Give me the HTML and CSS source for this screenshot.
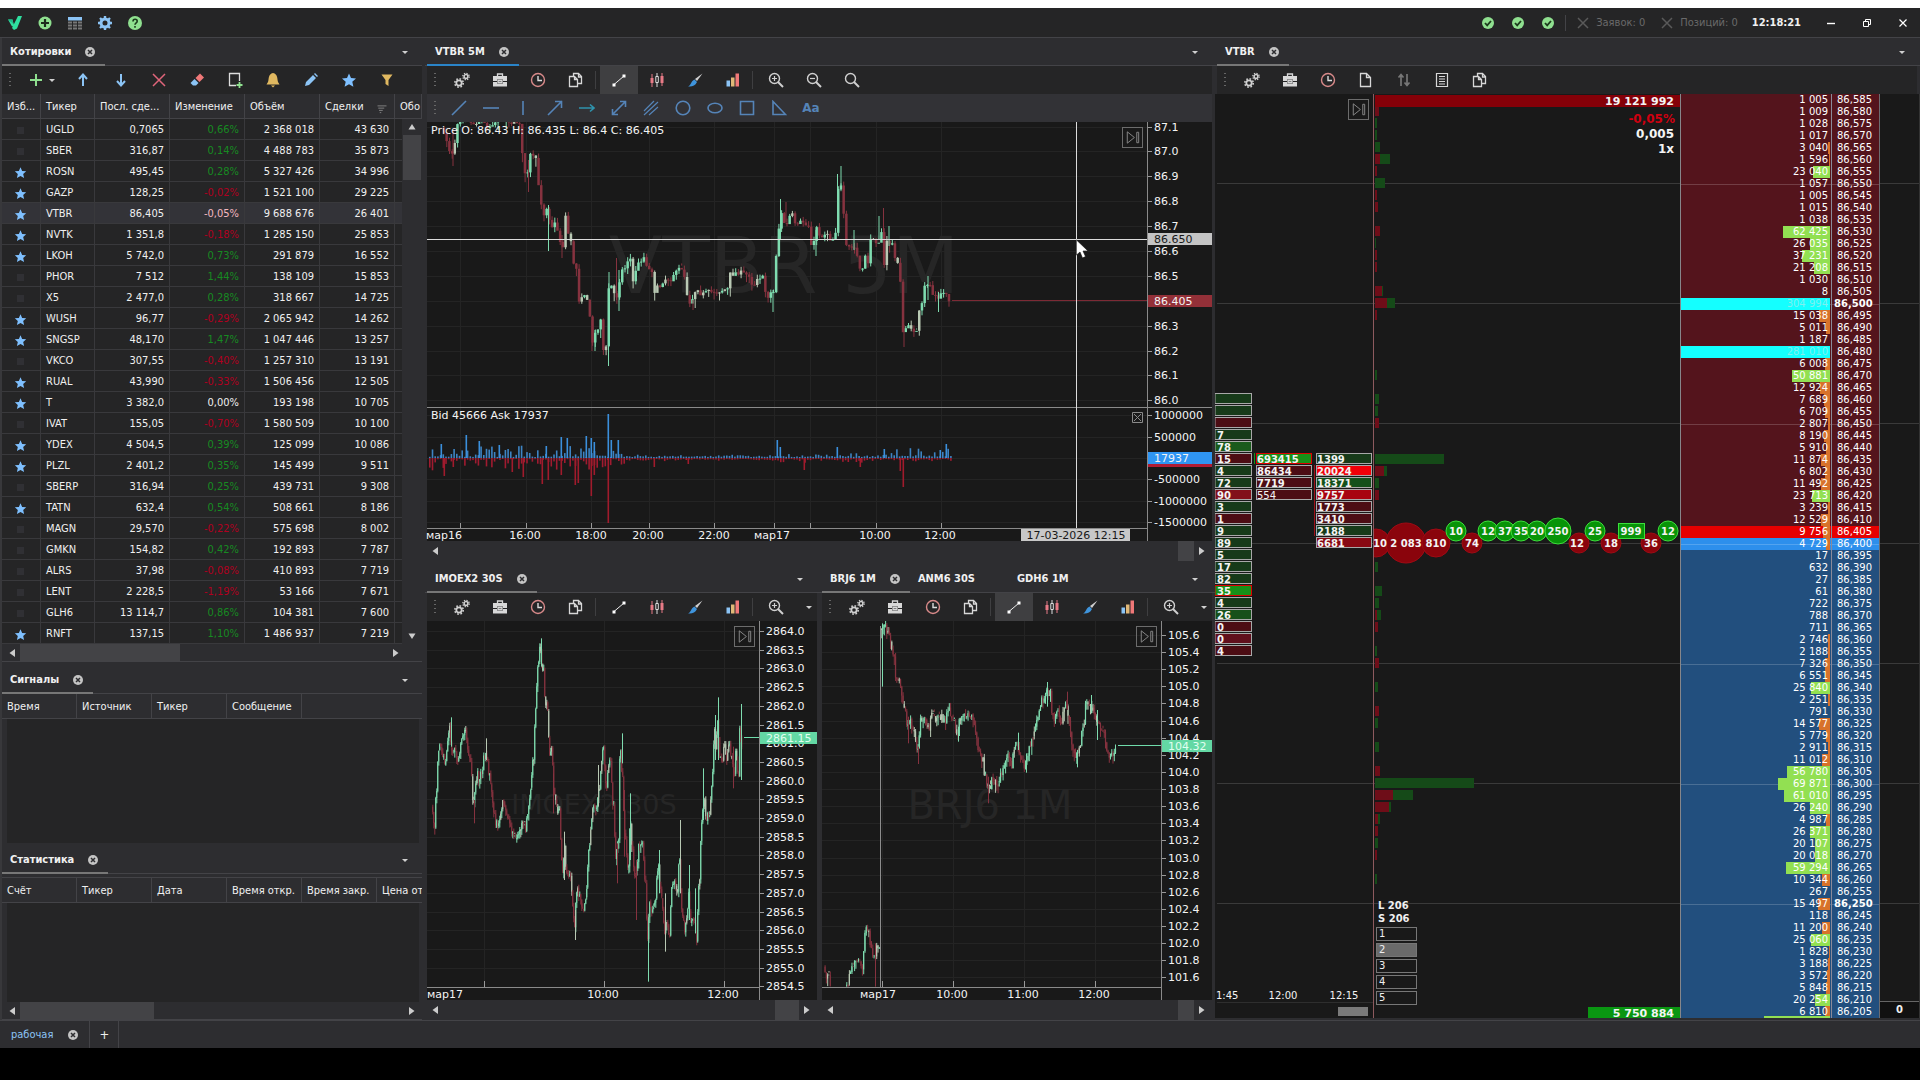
FILE: index.html
```html
<!DOCTYPE html>
<html lang="ru">
<head>
<meta charset="utf-8">
<title>Торговый терминал</title>
<link rel="stylesheet" href="styles.css">
</head>
<body>
<svg class="defs" aria-hidden="true">
  <symbol id="i-logo" viewBox="0 0 16 16"><path d="M1 4.500h4.500l1.500 6-2 1zM11 1h4l-5 12.500-3 1.500-2-2z" fill="#2fe0a0"/><path d="M1 4.500h4.500l1 4.500z" fill="#1fb98a"/></symbol>
  <symbol id="i-addc" viewBox="0 0 16 16"><circle cx="8" cy="8" r="6.500" fill="#8fe08f"/><path d="M8 4v8M4 8h8" stroke="#1c2b1c" stroke-width="2.200"/></symbol>
  <symbol id="i-grid" viewBox="0 0 16 16"><path d="M1 2h14v3.500H1z" fill="#8cc4f5"/><path d="M1 6.500h4v2H1zM6 6.500h4v2H6zM11 6.500h4v2h-4zM1 9.500h4v2H1zM6 9.500h4v2H6zM11 9.500h4v2h-4zM1 12.500h4v2H1zM6 12.500h4v2H6zM11 12.500h4v2h-4z" fill="#777"/></symbol>
  <symbol id="i-cog" viewBox="0 0 16 16"><circle cx="8" cy="8" r="4" fill="none" stroke="#8cc4f5" stroke-width="3"/><path d="M8 1v3M8 12v3M1 8h3M12 8h3M3 3l2 2M11 11l2 2M13 3l-2 2M5 11l-2 2" stroke="#8cc4f5" stroke-width="2.400"/></symbol>
  <symbol id="i-help" viewBox="0 0 16 16"><circle cx="8" cy="8" r="7" fill="#8fe08f"/><path d="M6 6.500c0-3 4.200-2.800 4.200-.2C10.200 8 8 7.800 8 9.800M8 11v1.800" stroke="#1c3b1c" stroke-width="1.600" fill="none"/></symbol>
  <symbol id="i-check" viewBox="0 0 16 16"><circle cx="8" cy="8" r="6" fill="#8fe08f"/><path d="M5 8l2.200 2.400L11 6" stroke="#1c3b1c" stroke-width="1.800" fill="none"/></symbol>
  <symbol id="i-xdim" viewBox="0 0 16 16"><path d="M3 3l10 10M13 3L3 13" stroke="#5a5a5a" stroke-width="1.500"/></symbol>
  <symbol id="i-min" viewBox="0 0 16 16"><path d="M4 8.500h8" stroke="#fff" stroke-width="1.400"/></symbol>
  <symbol id="i-restore" viewBox="0 0 16 16"><path d="M4.500 6.500h5v5h-5zM6.500 6.500v-2h5v5h-2" stroke="#fff" fill="none"/></symbol>
  <symbol id="i-close" viewBox="0 0 16 16"><path d="M4.500 4.500l7 7M11.500 4.500l-7 7" stroke="#fff" stroke-width="1.200"/></symbol>
  <symbol id="i-tabx" viewBox="0 0 16 16"><circle cx="8" cy="8" r="5" fill="#c4c4c4"/><path d="M6 6l4 4M10 6l-4 4" stroke="#2d2d30" stroke-width="1.500"/></symbol>
  <symbol id="i-caret" viewBox="0 0 16 16"><path d="M5 7h6l-3 3z" fill="#d0d0d0"/></symbol>
  <symbol id="i-plus" viewBox="0 0 16 16"><path d="M8 2v12M2 8h12" stroke="#8fe08f" stroke-width="2"/></symbol>
  <symbol id="i-up" viewBox="0 0 16 16"><path d="M8 14V3M4 7l4-4.500L12 7" stroke="#8cc4f5" stroke-width="2" fill="none"/></symbol>
  <symbol id="i-down" viewBox="0 0 16 16"><path d="M8 2v11M4 9l4 4.500L12 9" stroke="#8cc4f5" stroke-width="2" fill="none"/></symbol>
  <symbol id="i-del" viewBox="0 0 16 16"><path d="M2 2l12 12M14 2L2 14" stroke="#e0657a" stroke-width="1.500"/></symbol>
  <symbol id="i-eraser" viewBox="0 0 16 16"><path d="M6.500 6L11 1.500 15 5.500l-4.500 4.500z" fill="#f07878"/><path d="M5.500 7l4 4-2.500 2.500H4L1.500 11z" fill="#8cc4f5"/></symbol>
  <symbol id="i-pageadd" viewBox="0 0 16 16"><path d="M9 13.500H2.500v-12h10V9" stroke="#ddd" stroke-width="1.300" fill="none"/><path d="M12.500 10v6M9.500 13h6" stroke="#8fe08f" stroke-width="1.800"/></symbol>
  <symbol id="i-bell" viewBox="0 0 16 16"><path d="M8 1c-5 1-4 6-5 9l-1.500 2.500h13L13 10c-1-3 0-8-5-9zM6 13.500h4l-2 2z" fill="#e0b860"/></symbol>
  <symbol id="i-pencil" viewBox="0 0 16 16"><path d="M2 14l1-4 7-7 3 3-7 7zM11 2l1-1 3 3-1 1z" fill="#8cc4f5"/></symbol>
  <symbol id="i-star" viewBox="0 0 16 16"><path d="M8 1.500l2 4.500 5 .5-3.700 3.300 1.100 5L8 12.200l-4.400 2.600 1.100-5L1 6.500 6 6z" fill="#7fc0ff"/></symbol>
  <symbol id="i-filter" viewBox="0 0 16 16"><path d="M2.500 2.500h11L9.500 8v6L6.500 12V8z" fill="#e0b860"/></symbol>
  <symbol id="i-gears" viewBox="0 0 16 16"><g fill="none" stroke="#d0d0d0"><circle cx="5" cy="11" r="2.700" stroke-width="1.800"/><circle cx="5" cy="11" r="4.200" stroke-width="1.600" stroke-dasharray="1.650 1.650"/><circle cx="12" cy="4.500" r="1.900" stroke-width="1.500"/><circle cx="12" cy="4.500" r="3.200" stroke-width="1.300" stroke-dasharray="1.260 1.260"/></g></symbol>
  <symbol id="i-case" viewBox="0 0 16 16"><path d="M1 4h14v5h-4V7.500H5V9H1zM1 10h4v1.500h6V10h4v4.500H1z" fill="#d8d8d8"/><path d="M5.500 4V2h5v2M6 8.500h4v2H6z" stroke="#d8d8d8" stroke-width="1.300" fill="none"/></symbol>
  <symbol id="i-clock" viewBox="0 0 16 16"><circle cx="8" cy="8" r="6.500" fill="none" stroke="#d88a8a" stroke-width="1.400"/><path d="M8 4v4.500h4" stroke="#ddd" stroke-width="1.400" fill="none"/></symbol>
  <symbol id="i-copy" viewBox="0 0 16 16"><path d="M5.500 4V1.500h5l3 3v7H10M10.500 1.500V5h3M1.500 4.500h5l3 3v7h-8zM6.500 4.500v3h3" stroke="#d8d8d8" stroke-width="1.300" fill="none"/></symbol>
  <symbol id="i-page" viewBox="0 0 16 16"><path d="M2.500 1.500h6l4 4v9h-10zM8.500 1.500v4h4" stroke="#d8d8d8" stroke-width="1.300" fill="none"/></symbol>
  <symbol id="i-swap" viewBox="0 0 16 16"><path d="M5 14V2.500M2.500 5.500L5 2.500l2.500 3M11 2v11.500M8.500 10.500l2.500 3 2.500-3" stroke="#777" stroke-width="1.700" fill="none"/></symbol>
  <symbol id="i-doc" viewBox="0 0 16 16"><path d="M2.500 1.500h11v13h-11zM5 4.500h6M5 7h6M5 9.500h6M5 12h6" stroke="#d8d8d8" stroke-width="1.200" fill="none"/></symbol>
  <symbol id="i-trend" viewBox="0 0 16 16"><path d="M3 12.500L13 4" stroke="#eee"/><path d="M1.500 11.500h3v3h-3zM11.500 2.500h3v3h-3z" fill="#fff"/></symbol>
  <symbol id="i-candles" viewBox="0 0 16 16"><path d="M3 2v13M13 1v13" stroke="#e77a86"/><path d="M1.500 6h3v5h-3zM11.500 4h3v7h-3z" fill="#e77a86"/><path d="M8 1v3M8 11v4M6.800 4.500h2.500v6H6.800z" stroke="#ddd" fill="none"/></symbol>
  <symbol id="i-brush" viewBox="0 0 16 16"><path d="M15.500 1.500L8 7l2 2z" fill="#d0d0d0"/><path d="M7.500 7.500l2.500 2.500c-2 4-5 5-9 4.500 3-1 3-5.500 6.500-7z" fill="#3f94dc"/></symbol>
  <symbol id="i-bars" viewBox="0 0 16 16"><path d="M1.500 8.500h3.500v6H1.500z" fill="#8cc4f5"/><path d="M6 5.500h3.500v9H6z" fill="#e0b878"/><path d="M10.500 1.500H14v13h-3.500z" fill="#f07878"/></symbol>
  <symbol id="i-zin" viewBox="0 0 16 16"><circle cx="6.500" cy="6.500" r="5" stroke="#d0d0d0" stroke-width="1.400" fill="none"/><path d="M6.500 4v5M4 6.500h5" stroke="#d0d0d0" stroke-width="1.200"/><path d="M10 10l5 5" stroke="#d0d0d0" stroke-width="2"/></symbol>
  <symbol id="i-zout" viewBox="0 0 16 16"><circle cx="6.500" cy="6.500" r="5" stroke="#d0d0d0" stroke-width="1.400" fill="none"/><path d="M4 6.500h5" stroke="#d0d0d0" stroke-width="1.200"/><path d="M10 10l5 5" stroke="#d0d0d0" stroke-width="2"/></symbol>
  <symbol id="i-find" viewBox="0 0 16 16"><circle cx="6.500" cy="6.500" r="5" stroke="#d0d0d0" stroke-width="1.400" fill="none"/><path d="M10 10l5 5" stroke="#d0d0d0" stroke-width="2"/></symbol>
  <symbol id="i-line" viewBox="0 0 16 16"><path d="M1 15L15 1" class="draw"/></symbol>
  <symbol id="i-hline" viewBox="0 0 16 16"><path d="M0 8h16" class="draw"/></symbol>
  <symbol id="i-vline" viewBox="0 0 16 16"><path d="M8 1v14" class="draw"/></symbol>
  <symbol id="i-arrow" viewBox="0 0 16 16"><path d="M1 15L15 1M8 1.500h6.500V8" class="draw"/></symbol>
  <symbol id="i-harrow" viewBox="0 0 16 16"><path d="M0 8h15M11 4.500L15 8l-4 3.500" class="draw teal"/></symbol>
  <symbol id="i-darrow" viewBox="0 0 16 16"><path d="M2 14L14 2M9 1.500h5.500V7M1.500 9v5.500H7" class="draw"/></symbol>
  <symbol id="i-par" viewBox="0 0 16 16"><path d="M1 11L11 1M1 15L15 2M6 15l9-8" class="draw thin"/></symbol>
  <symbol id="i-circ" viewBox="0 0 16 16"><circle cx="8" cy="8" r="6.800" class="draw"/></symbol>
  <symbol id="i-ell" viewBox="0 0 16 16"><ellipse cx="8" cy="8" rx="7" ry="4.800" class="draw"/></symbol>
  <symbol id="i-rect" viewBox="0 0 16 16"><path d="M1.500 1.500h13v13h-13z" class="draw"/></symbol>
  <symbol id="i-tri" viewBox="0 0 16 16"><path d="M2 1.500v13h12.500z" class="draw"/></symbol>
  <symbol id="i-next" viewBox="0 0 20 20"><path d="M4.500 4v12l7.500-6zM14.500 4.500h2v11h-2z" stroke="#8a8a8a" fill="none"/></symbol>
  <symbol id="i-sort" viewBox="0 0 16 16"><path d="M2 4.500h12M3 7.500h8M4 10.500h5M5 13.500h2" stroke="#999" stroke-width="1"/></symbol>
  <symbol id="i-la" viewBox="0 0 16 16"><path d="M11 4v8L5.500 8z" fill="#ccc"/></symbol>
  <symbol id="i-ra" viewBox="0 0 16 16"><path d="M5 4v8l5.500-4z" fill="#ccc"/></symbol>
  <symbol id="i-ua" viewBox="0 0 16 16"><path d="M4.500 10.500h7L8 5z" fill="#ccc"/></symbol>
  <symbol id="i-da" viewBox="0 0 16 16"><path d="M4.500 5.500h7L8 11z" fill="#ccc"/></symbol>
</svg>

<div class="strip"></div>
<div class="app">
  <header class="titlebar">
    <div class="launch" data-icons="logo addc grid cog help"></div>
    <div class="status">
      <div class="checks" data-icons="check check check"></div>
      <span class="count"><svg class="ic"><use href="#i-xdim"/></svg>Заявок: 0</span>
      <span class="count"><svg class="ic"><use href="#i-xdim"/></svg>Позиций: 0</span>
      <time class="clock">12:18:21</time>
      <div class="winctl" data-icons="min restore close"></div>
    </div>
  </header>

  <main class="workspace">
    <div class="col left">
      <section class="panel quotes">
        <nav class="tabs"><a href="#" class="tab on">Котировки<svg class="ic"><use href="#i-tabx"/></svg></a><button class="drop" aria-label="Меню"><svg class="ic"><use href="#i-caret"/></svg></button></nav>
        <div class="toolbar" data-tools="grip add up down del eraser pageadd bell pencil star filter"></div>
        <div class="gridbox">
          <table class="quotes-table">
            <colgroup><col class="c-fav"><col class="c-tic"><col class="c-num"><col class="c-num"><col class="c-num"><col class="c-num"><col></colgroup>
            <thead><tr><th>Изб...</th><th>Тикер</th><th>Посл. сде...</th><th>Изменение</th><th>Объём</th><th>Сделки<svg class="ic sort"><use href="#i-sort"/></svg></th><th>Обо</th></tr></thead>
            <tbody id="quotes"></tbody>
          </table>
          <div class="vscroll"><svg class="ic"><use href="#i-ua"/></svg><i></i><svg class="ic last"><use href="#i-da"/></svg></div>
        </div>
        <div class="hscroll short"><svg class="ic"><use href="#i-la"/></svg><i class="w160"></i><svg class="ic last"><use href="#i-ra"/></svg></div>
      </section>
      <section class="panel signals">
        <nav class="tabs"><a href="#" class="tab on">Сигналы<svg class="ic"><use href="#i-tabx"/></svg></a><button class="drop" aria-label="Меню"><svg class="ic"><use href="#i-caret"/></svg></button></nav>
        <table class="plain"><thead><tr><th>Время</th><th>Источник</th><th>Тикер</th><th>Сообщение</th><th></th></tr></thead></table>
        <div class="void"></div>
      </section>
      <section class="panel stats">
        <nav class="tabs"><a href="#" class="tab on">Статистика<svg class="ic"><use href="#i-tabx"/></svg></a><button class="drop" aria-label="Меню"><svg class="ic"><use href="#i-caret"/></svg></button></nav>
        <table class="plain gap"><thead><tr><th>Счёт</th><th>Тикер</th><th>Дата</th><th>Время откр.</th><th>Время закр.</th><th>Цена от</th></tr></thead></table>
        <div class="void"></div>
        <div class="hscroll"><svg class="ic"><use href="#i-la"/></svg><i class="w134"></i><svg class="ic last"><use href="#i-ra"/></svg></div>
      </section>
    </div>

    <div class="col middle">
      <section class="panel main-chart">
        <nav class="tabs"><a href="#" class="tab on blue">VTBR 5M<svg class="ic"><use href="#i-tabx"/></svg></a><button class="drop" aria-label="Меню"><svg class="ic"><use href="#i-caret"/></svg></button></nav>
        <div class="toolbar" data-tools="grip gears case clock copy sep trend* candles brush bars sep zin zout find"></div>
        <div class="toolbar drawing" data-tools="grip line hline vline arrow harrow darrow par circ ell rect tri text"></div>
        <div class="chartbox">
          <svg class="chart" id="c1" viewBox="425 122 790 419" preserveAspectRatio="xMinYMin meet"></svg>
          <button class="next n1" aria-label="К последней свече"><svg><use href="#i-next"/></svg></button>
        </div>
        <div class="hscroll end"><svg class="ic"><use href="#i-la"/></svg><i class="w16"></i><svg class="ic"><use href="#i-ra"/></svg></div>
      </section>
      <div class="pair">
        <section class="panel">
          <nav class="tabs"><a href="#" class="tab on">IMOEX2 30S<svg class="ic"><use href="#i-tabx"/></svg></a><button class="drop" aria-label="Меню"><svg class="ic"><use href="#i-caret"/></svg></button></nav>
          <div class="toolbar" data-tools="grip gears case clock copy sep trend candles brush bars sep zin more"></div>
          <div class="chartbox">
            <svg class="chart" id="c2" viewBox="425 621 395 379" preserveAspectRatio="xMinYMin meet"></svg>
            <button class="next n2" aria-label="К последней свече"><svg><use href="#i-next"/></svg></button>
          </div>
          <div class="hscroll end"><svg class="ic"><use href="#i-la"/></svg><i class="w24"></i><svg class="ic"><use href="#i-ra"/></svg></div>
        </section>
        <section class="panel">
          <nav class="tabs"><a href="#" class="tab on">BRJ6 1M<svg class="ic"><use href="#i-tabx"/></svg></a><a href="#" class="tab wide">ANM6 30S</a><a href="#" class="tab">GDH6 1M</a><button class="drop" aria-label="Меню"><svg class="ic"><use href="#i-caret"/></svg></button></nav>
          <div class="toolbar" data-tools="grip gears case clock copy sep trend* candles brush bars sep zin more"></div>
          <div class="chartbox">
            <svg class="chart" id="c3" viewBox="820 621 395 379" preserveAspectRatio="xMinYMin meet"></svg>
            <button class="next n3" aria-label="К последней свече"><svg><use href="#i-next"/></svg></button>
          </div>
          <div class="hscroll end"><svg class="ic"><use href="#i-la"/></svg><i class="w16"></i><svg class="ic"><use href="#i-ra"/></svg></div>
        </section>
      </div>
    </div>

    <section class="panel dom">
      <nav class="tabs"><a href="#" class="tab on">VTBR<svg class="ic"><use href="#i-tabx"/></svg></a><button class="drop" aria-label="Меню"><svg class="ic"><use href="#i-caret"/></svg></button></nav>
      <div class="toolbar" data-tools="grip gears case clock page swap doc copy"></div>
      <div class="book">
        <div class="chartbox">
          <svg class="chart" id="c4" viewBox="1215 94 465 924" preserveAspectRatio="xMaxYMin slice"></svg>
          <button class="next n4" aria-label="К последней сделке"><svg><use href="#i-next"/></svg></button>
          <div class="lots"><b>L 206</b><b>S 206</b><button>1</button><button class="sel">2</button><button>3</button><button>4</button><button>5</button></div>
        </div>
        <div class="ladderbox"><table class="ladder"><tbody id="ladder"></tbody></table><i class="peek"></i></div>
        <div class="own"><b>0</b></div>
      </div>
    </section>
  </main>

  <footer class="pages"><a href="#" class="page">рабочая<svg class="ic"><use href="#i-tabx"/></svg></a><button class="newpage">+</button></footer>
</div>
<script src="app.js"></script>
</body>
</html>
```
FILE: styles.css
```css
* { box-sizing: border-box; }
:root {
  --ui: "DejaVu Sans Condensed", "Noto Sans", sans-serif;
  --wide: "DejaVu Sans", "Liberation Sans", sans-serif;
  --panel: #2d2d30;
  --dark: #252526;
  --plot: #191919;
  --line: #434347;
}
body { margin: 0; background: #000; color: #f0f0f0; font: 11px/14px var(--ui); min-height: 100vh; display: flex; flex-direction: column; overflow: hidden; }
button { font: inherit; color: inherit; background: none; border: 0; padding: 0; margin: 0; }
a { color: inherit; text-decoration: none; }
.defs { display: none; }
.ic { width: 16px; height: 16px; flex: none; display: block; }
.draw { fill: none; stroke: #5584b8; stroke-width: 1.6; }
.draw.teal { stroke: #2f93ad; }
.draw.thin { stroke-width: 1.2; }
.strip { height: 8px; background: #fff; flex: none; }
.app { height: calc(100vh - 40px); display: flex; flex-direction: column; background: var(--panel); }

.titlebar { height: 30px; flex: none; background: var(--dark); display: flex; justify-content: space-between; align-items: center; border-bottom: 1px solid var(--line); padding: 0 9px 0 7px; }
.launch, .checks { display: flex; gap: 14px; }
.status { display: flex; align-items: center; }
.checks { padding-right: 9px; border-right: 1px solid var(--line); margin-right: 9px; }
.count { display: flex; align-items: center; gap: 5px; color: #6a6a6a; margin-right: 14px; }
.clock { font-weight: bold; margin-right: 22px; }
.winctl { display: flex; gap: 20px; }

.workspace { flex: 1; min-height: 0; display: grid; grid-template-columns: minmax(0, 425fr) minmax(0, 790fr) minmax(0, 705fr); }
.col { display: flex; flex-direction: column; min-height: 0; min-width: 0; }
.middle { display: grid; grid-template-rows: minmax(0, 527fr) minmax(0, 455fr); }
.pair { display: grid; grid-template-columns: minmax(0, 1fr) minmax(0, 1fr); min-height: 0; }
.panel { display: flex; flex-direction: column; min-height: 0; min-width: 0; }
.left { border-left: 2px solid #38383b; }
.left .panel { margin-right: 3px; }
.main-chart { padding-bottom: 4px; }

.tabs { height: 28px; flex: none; display: flex; border-bottom: 1px solid var(--line); padding: 0 12px 0 2px; }
.left .tabs { padding: 0 9px 0 0; }
.dom .tabs { padding-right: 10px; }
.tab { display: flex; align-items: center; gap: 11px; font-weight: bold; padding: 2px 7px 0 8px; height: 28px; border-bottom: 2px solid transparent; }
.tab.on { border-bottom-color: #777; }
.tab.on.blue { border-color: #2a84c8; }
.tab.wide { padding-right: 34px; }
.drop { margin-left: auto; }
.toolbar { height: 28px; flex: none; display: flex; align-items: center; padding-left: 3px; margin: 0 3px 0 2px; background: var(--dark); }
.left .toolbar { margin: 0; }
.toolbar.drawing { background: #323236; }
.tool { width: 38px; height: 28px; display: flex; align-items: center; justify-content: center; }
.tool.on { background: #3f3f41; }
.drawing .tool { width: 32px; color: #5584b8; font: bold 12px/14px var(--wide); }
.tool.add { width: 46px; justify-content: flex-start; padding-left: 10px; }
.tool.more { width: 16px; margin-left: auto; }
.grip { width: 13px; height: 14px; padding-left: 4px; }
.grip::before { content: ""; display: block; width: 2px; height: 14px; background: repeating-linear-gradient(#666 0 1px, transparent 1px 4px); }
.sep { width: 5px; height: 18px; border-left: 1px solid #3f3f41; }

.quotes { height: 628px; flex: none; }
.gridbox { position: relative; background: var(--dark); overflow: hidden; }
table { border-collapse: separate; border-spacing: 0; table-layout: fixed; }
.quotes-table { width: 100%; }
.c-fav { width: 39px; } .c-tic { width: 54px; } .c-num { width: 75px; }
th { font-weight: normal; text-align: left; height: 25px; padding: 2px 0 0 5px; background: var(--panel); border-right: 1px solid var(--line); border-bottom: 1px solid var(--line); white-space: nowrap; overflow: hidden; }
th .sort { float: right; width: 12px; height: 12px; margin: 2px 6px 0 0; }
.quotes-table td { height: 21px; padding: 2px 5px 0; text-align: right; border-right: 1px solid #39393c; border-bottom: 1px solid #39393c; line-height: 14px; white-space: nowrap; }
.quotes-table td:first-child { padding: 2px 0 0 12px; }
.quotes-table td:nth-child(2) { text-align: left; }
.quotes-table .pick td { background: #333338; }
.quotes-table .ic { width: 13px; height: 13px; }
.quotes-table .sort { width: 12px; }
.nofav { display: block; width: 7px; height: 7px; margin-left: 3px; background: #303034; }
.gain { color: #178a22; }
.loss { color: #b00020; }
.pick .loss { color: #f4b8c0; }
.vscroll { position: absolute; top: 25px; right: 0; bottom: 0; width: 20px; background: var(--panel); display: flex; flex-direction: column; align-items: center; }
.vscroll i { width: 18px; height: 45px; background: #434346; }
.vscroll .last { margin-top: auto; }
.hscroll { height: 20px; flex: none; display: flex; align-items: center; padding: 0 2px; background: var(--panel); }
.left .hscroll { height: 18px; border-bottom: 1px solid var(--line); }
.left .hscroll.short { padding-right: 18px; }
.hscroll i { height: 18px; background: #434346; }
.left .hscroll i { height: 17px; }
.hscroll .last { margin-left: auto; }
.hscroll.end { padding: 0 5px 0 2px; }
.hscroll.end i { margin-left: auto; height: 20px; }
.w160 { width: 160px; } .w134 { width: 134px; } .w16 { width: 16px; } .w24 { width: 24px; }
.signals { flex: 180; }
.stats { flex: 174; }
.plain { width: 100%; flex: none; }
.plain th { width: 75px; }
.plain th:last-child { width: auto; border-right: 0; }
.plain.gap { margin-top: 3px; border-top: 1px solid var(--line); }
.void { flex: 1; margin: 0 3px 0 5px; background: var(--dark); }
.signals .void { margin-bottom: 3px; }

.chartbox { position: relative; flex: 1; min-height: 0; min-width: 0; }
.chart { position: absolute; width: 100%; height: 100%; font: 11px var(--wide); fill: #f4f4f4; }
.next { position: absolute; width: 21px; height: 21px; border: 1px solid #6c6c6c; top: 5px; }
.next svg { width: 19px; height: 19px; display: block; }
.n1 { right: 72px; } .n2 { right: 65px; } .n3 { right: 58px; } .n4 { right: 311px; }
.wm { fill: #262626; }
.cl { font: bold 10px var(--wide); }
.tb { font: bold 11px var(--wide); }
.thin10 { font: 10px var(--wide); }
.big { font: bold 12px var(--wide); }

.book { flex: 1; min-height: 0; display: flex; background: var(--plot); margin-bottom: 2px; }
.ladderbox { width: 200px; flex: none; overflow: hidden; border-left: 1px solid #86868a; background: #224f7e; position: relative; }
.peek { position: absolute; right: 50px; bottom: 0; width: 66px; height: 2px; background: #92e052; }
.ladder { width: 100%; font: 10px/12px var(--wide); color: #fff; }
.ladder td { height: 12px; padding: 0; position: relative; white-space: nowrap; }
.ladder .q { width: 151px; text-align: right; padding-right: 3px; border-right: 1px solid #8a8a9a; }
.ladder .p { padding-left: 5px; border-right: 1px solid #6c6c70; }
.ladder .ask td { background: #54141c; }
.ladder .bid td { background: #224f7e; }
.ladder .bestask td { background: #e60000; }
.ladder .bestbid td { background: #2d8fec; }
.ladder .half td { background-image: linear-gradient(transparent 6px, rgba(255,255,255,.18) 6px 7px, transparent 7px); }
.ladder .round .p { font-weight: bold; padding-left: 2px; }
.ladder span { position: relative; }
.ladder i { position: absolute; right: 1px; top: 0; height: 12px; background: #d8722a; }
.ladder i.g { background: #92e052; }
.ladder i.c { background: #14ffff; }
.ladder .huge span { color: #7df0f0; }
.lots { position: absolute; left: 161px; top: 805px; width: 41px; display: flex; flex-direction: column; font: 10px/13px var(--wide); }
.lots b { padding-left: 2px; }
.lots button { height: 14px; margin-top: 2px; text-align: left; padding-left: 2px; border: 1px solid #777; line-height: 12px; }
.lots .sel { background: #6a6a6a; }
.own { width: 40px; flex: none; display: flex; flex-direction: column; justify-content: flex-end; background: repeating-linear-gradient(transparent 0 89px, #3a3a3a 89px 90px, transparent 90px 120px); border-right: 1px solid #333; text-align: center; }
.own b { border-top: 1px solid #666; font: bold 10px/16px var(--wide); background: #111; }

.pages { height: 28px; flex: none; display: flex; border-top: 1px solid var(--line); }
.page { display: flex; align-items: center; gap: 12px; padding: 0 8px 0 11px; color: #8cc4f5; border-right: 1px solid var(--line); }
.newpage { width: 29px; font-size: 13px; border-right: 1px solid var(--line); }
```
FILE: app.js
```js
const use = n => `<svg class="ic"><use href="#i-${n}"/></svg>`;

document.querySelectorAll('[data-icons]').forEach(el => {
  el.innerHTML = el.dataset.icons.split(' ').map(n => `<button aria-label="${n}">${use(n)}</button>`).join('');
});
document.querySelectorAll('[data-tools]').forEach(el => {
  el.innerHTML = el.dataset.tools.split(' ').map(n => {
    if (n === 'grip') return '<span class="grip"></span>';
    if (n === 'sep') return '<span class="sep"></span>';
    if (n === 'add') return `<button class="tool add" aria-label="add">${use('plus')}${use('caret')}</button>`;
    if (n === 'more') return `<button class="tool more" aria-label="more">${use('caret')}</button>`;
    if (n === 'text') return '<button class="tool">Aa</button>';
    const on = n.endsWith('*');
    const id = n.replace('*', '');
    return `<button class="tool${on ? ' on' : ''}" aria-label="${id}">${use(id)}</button>`;
  }).join('');
});

// favourite | ticker | last price | change | volume | trades
const quotes = `0|UGLD|0,7065|0,66%|2 368 018|43 630
0|SBER|316,87|0,14%|4 488 783|35 873
1|ROSN|495,45|0,28%|5 327 426|34 996
1|GAZP|128,25|-0,02%|1 521 100|29 225
1|VTBR|86,405|-0,05%|9 688 676|26 401
1|NVTK|1 351,8|-0,18%|1 285 150|25 853
1|LKOH|5 742,0|0,73%|291 879|16 552
0|PHOR|7 512|1,44%|138 109|15 853
0|X5|2 477,0|0,28%|318 667|14 725
1|WUSH|96,77|-0,29%|2 065 942|14 262
1|SNGSP|48,170|1,47%|1 047 446|13 257
0|VKCO|307,55|-0,40%|1 257 310|13 191
1|RUAL|43,990|-0,33%|1 506 456|12 505
1|T|3 382,0|0,00%|193 198|10 705
0|IVAT|155,05|-0,70%|1 580 509|10 100
1|YDEX|4 504,5|0,39%|125 099|10 086
1|PLZL|2 401,2|0,35%|145 499|9 511
0|SBERP|316,94|0,25%|439 731|9 308
1|TATN|632,4|0,54%|508 661|8 186
0|MAGN|29,570|-0,22%|575 698|8 002
0|GMKN|154,82|0,42%|192 893|7 787
0|ALRS|37,98|-0,08%|410 893|7 719
0|LENT|2 228,5|-1,19%|53 166|7 671
0|GLH6|13 114,7|0,86%|104 381|7 600
1|RNFT|137,15|1,10%|1 486 937|7 219`;
document.getElementById('quotes').innerHTML = quotes.split('\n').map(r => {
  const [fav, t, last, ch, vol, deals] = r.split('|');
  const cls = ch[0] === '-' ? 'loss' : ch === '0,00%' ? '' : 'gain';
  return `<tr${t === 'VTBR' ? ' class="pick"' : ''}><td>${fav === '1' ? use('star') : '<span class="nofav"></span>'}</td><td>${t}</td><td>${last}</td><td class="${cls}">${ch}</td><td>${vol}</td><td>${deals}</td><td></td></tr>`;
}).join('');

// order book, from 86,585 down in steps of 0,005
const sizes = [1005,1009,1028,1017,3040,1596,23040,1057,1005,1015,1038,62425,26035,37231,21208,1030,8,304994,15038,5011,1187,281010,6008,50881,12924,7689,6709,2807,8190,5910,11874,6802,11492,23713,3239,12529,9756,4729,17,632,27,61,722,788,711,2746,2188,7326,6551,25840,2251,791,14577,5779,2911,11012,56780,69871,61010,26240,4987,26371,20107,20018,59294,10344,267,15497,118,11200,25060,1828,3188,3572,5848,20254,6810];
const group = n => String(n).replace(/\B(?=(\d{3})+$)/g, ' ');
document.getElementById('ladder').innerHTML = sizes.map((s, i) => {
  const p = 86585 - i * 5;
  const cls = [i < 37 ? 'ask' : 'bid'];
  if (i === 36) cls.push('bestask');
  if (i === 37) cls.push('bestbid');
  if (p % 50 === 0) cls.push('half');
  if (p % 250 === 0) cls.push('round');
  if (s > 100000) cls.push('huge');
  const w = s < 1500 ? 0 : Math.min(150, Math.round(s * 0.00075));
  const kind = s > 100000 ? 'c' : s > 20000 ? 'g' : '';
  return `<tr class="${cls.join(' ')}"><td class="q"><i class="${kind}" style="width:${w}px"></i><span>${group(s)}</span></td><td class="p">86,${p % 1000}</td></tr>`;
}).join('');

// drawing helpers
let seed = 7;
const rnd = () => (seed = (seed * 16807) % 2147483647) / 2147483647;
const rect = (x, y, w, h, f, s) => `<rect x="${x}" y="${y}" width="${w}" height="${h}" fill="${f}"${s ? ` stroke="${s}"` : ''}/>`;
const seg = (x1, y1, x2, y2, c) => `<path d="M${x1} ${y1}L${x2} ${y2}" stroke="${c}"/>`;
const txt = (x, y, t, a, c, f) => t === '' ? '' : `<text x="${x}" y="${y}"${a ? ` text-anchor="${a}"` : ''}${c ? ` class="${c}"` : ''}${f ? ` fill="${f}"` : ''}>${t}</text>`;
const UP = '#7fdcb0', DOWN = '#86323f', MIX = '#b9c9b4';

function candles(points, step, body, noise, wick) {
  const p = points.trim().split(/\s+/).map(s => s.split(',').map(Number));
  let out = '', k = 0, prev = p[0][1];
  for (let x = p[0][0]; x < p[p.length - 1][0]; x += step) {
    while (k < p.length - 2 && p[k + 1][0] <= x) k++;
    const [ax, ay] = p[k], [bx, by] = p[k + 1];
    const y = ay + (by - ay) * Math.min(1, (x + step - ax) / (bx - ax)) + (rnd() - .5) * noise;
    const top = Math.min(prev, y), h = Math.max(1, Math.abs(y - prev));
    const c = y < prev ? (rnd() < .2 ? MIX : UP) : (rnd() < .12 ? MIX : DOWN);
    out += rect((x - .4).toFixed(1), (top - rnd() * wick).toFixed(1), 1, (h + rnd() * wick * 2).toFixed(1), c);
    out += rect((x - body / 2).toFixed(1), top.toFixed(1), body, h.toFixed(1), c);
    prev = y;
  }
  return out;
}
const zoomed = (s, ox, oy) => s.trim().split(/\s+/).map(q => {
  const [x, y] = q.split(',').map(Number);
  return (ox + x / 3).toFixed(1) + ',' + (oy + y / 3).toFixed(1);
}).join(' ');
const wicks = list => list.map(([x, a, b, c]) => seg(x, a, x, b, c)).join('');

// VTBR 5M
(() => {
  let s = rect(427, 122, 785, 419, '#191919');
  const xs = [460, 526, 591, 649, 714, 774, 810, 876, 941];
  const ys = [[127, '87.1'], [151, '87.0'], [176, '86.9'], [201, '86.8'], [226, '86.7'], [251, '86.6'], [276, '86.5'], [301, ''], [326, '86.3'], [351, '86.2'], [375, '86.1'], [400, '86.0'], [415, '1000000'], [437, '500000'], [458, ''], [479, '-500000'], [501, '-1000000'], [522, '-1500000']];
  xs.forEach(x => s += seg(x + .5, 122, x + .5, 528, '#242424') + seg(x + .5, 523, x + .5, 528, '#999'));
  ys.forEach(([y]) => s += seg(427, y + .5, 1147, y + .5, '#242424') + seg(1147, y + .5, 1152, y + .5, '#999'));
  s += `<text x="784" y="293" text-anchor="middle" class="wm" style="font-size:78px">VTBR 5M</text>`;
  s += '<clipPath id="k1"><path d="M427 122h720v285H427z"/></clipPath><g clip-path="url(#k1)">';
  s += candles('444,128 448,140 453,152 456,142 460,122 468,116 476,124 482,120 490,126 497,122 505,116 515,123 520,122 524,155 528,174 532,155 536,158 541,187 546,214 549,207 551,218 554,226 557,224 560,230 564,246 568,216 572,240 575,265 579,268 581,300 585,294 588,302 591,316 594,344 598,330 602,318 606,350 608,348 610,288 613,286 618,296 620,280 626,268 631,259 635,282 640,264 646,257 652,270 657,291 662,286 667,279 672,279 677,273 683,268 687,276 691,302 695,298 699,288 704,294 712,292 722,291 729,289 733,274 741,272 750,275 755,284 760,277 765,278 769,296 774,292 777,255 780,228 783,214 788,225 793,215 798,226 804,222 809,226 814,243 819,226 823,237 828,233 833,239 836,231 838,190 842,187 845,216 849,247 855,248 859,256 863,271 866,255 870,262 874,237 879,241 883,234 885,266 889,240 893,245 899,262 902,280 904,334 907,328 913,327 919,332 923,305 928,284 931,285 936,296 939,300 941,293 947,293 951,300', 2.7, 2.5, 5, 5);
  s += wicks([[453, 130, 166, DOWN], [528.5, 160, 192, DOWN], [548.5, 205, 251, UP], [562, 235, 258, DOWN], [608.5, 300, 366, UP], [595, 330, 351, UP], [592, 320, 351, DOWN], [616.500, 258, 300, DOWN], [619, 270, 311, UP], [609, 272, 300, UP], [693, 300, 310, DOWN], [773, 290, 312, UP], [780.5, 199, 240, UP], [786, 202, 222, DOWN], [837.5, 174, 200, UP], [841, 166, 190, UP], [816, 230, 256, UP], [879, 216, 240, UP], [883.500, 208, 238, DOWN], [889, 226, 246, UP], [854, 230, 250, UP], [904, 325, 347, DOWN], [928, 276, 300, UP], [938.5, 292, 312, UP]]);
  s += '</g>';
  // bid / ask volume
  const ask = { 441: 14, 466: 23, 479: 17, 499: 13, 546: 12, 561: 21, 567: 20, 586: 22, 591: 20, 594: 16, 608: 44, 611: 18, 618: 18, 777: 18, 780: 11, 837: 11, 884: 9, 940: 8, 946: 14 };
  const bid = { 444: 18, 453: 9, 512: 14, 523: 19, 542: 26, 548: 22, 561: 17, 575: 27, 578: 25, 591: 38, 594: 17, 608: 65, 654: 9, 688: 6, 804: 12, 860: 9, 900: 13, 903: 29 };
  for (let x = 429; x < 951; x += 2.7) {
    const busy = x < 625 ? 9 : x < 770 ? 1.5 : x < 885 ? 2.5 : 8;
    const a = 1 + rnd() * rnd() * busy * 1.8, b = 1 + rnd() * rnd() * (x > 885 ? 2.5 : busy * 1.5);
    s += rect(x.toFixed(1), (458 - a).toFixed(1), 1.6, a.toFixed(1), '#3d84c4') + rect(x.toFixed(1), 458, 1.6, b.toFixed(1), '#a01b30');
  }
  Object.entries(ask).forEach(([x, h]) => s += rect(+x - .5, 458 - h, 1.6, h, '#3b8fdc'));
  Object.entries(bid).forEach(([x, h]) => s += rect(+x - .5, 458, 1.6, h, '#a01b2c'));
  s += seg(427, 407.5, 1212, 407.5, '#8a8a8a') + seg(427, 528.5, 1147, 528.5, '#8a8a8a') + seg(1147.5, 122, 1147.5, 541, '#8a8a8a');
  s += seg(952, 300.5, 1147, 300.5, '#7c2a35');
  ys.forEach(([y, t]) => s += txt(1154, y + 4, t));
  [[444, 'мар16'], [525, '16:00'], [591, '18:00'], [648, '20:00'], [714, '22:00'], [772, 'мар17'], [875, '10:00'], [940, '12:00']].forEach(([x, t]) => s += txt(x, 539, t, 'middle'));
  s += rect(1148, 464, 64, 3, '#b01c34') + rect(1148, 452, 64, 12, '#2f95f2') + txt(1154, 462, '17937');
  s += rect(1148, 295, 64, 12, '#933038') + txt(1154, 305, '86.405');
  s += seg(427, 239.5, 1147, 239.5, '#dcdcdc') + seg(1076.5, 122, 1076.5, 528, '#dcdcdc');
  s += rect(1148, 233, 64, 12, '#c4c4c4') + txt(1154, 243, '86.650', '', '', '#181818');
  s += rect(1021, 529, 109, 12, '#c8c8c8') + txt(1076, 539, '17-03-2026 12:15', 'middle', '', '#181818');
  s += txt(431, 134, 'Price O: 86.43 H: 86.435 L: 86.4 C: 86.405') + txt(431, 419, 'Bid 45666 Ask 17937');
  s += '<path d="M1132.500 412.500h10v10h-10zM1134 414l7 7M1141 414l-7 7" stroke="#8a8a8a" fill="none"/>';
  s += '<path d="M1076.500 240v15l3.500-3 2.500 6 3-1.500-2.500-5.500h5z" fill="#fff" stroke="#111" stroke-width=".6"/>';
  document.getElementById('c1').innerHTML = s;
})();

// IMOEX2 30S
(() => {
  let s = rect(427, 621, 390, 379, '#191919');
  for (let i = 0; i < 20; i++) {
    const y = Math.round(631 + i * 18.7);
    if (i < 19) s += seg(427, y + .5, 759, y + .5, '#242424');
    s += seg(759, y + .5, 764, y + .5, '#999') + txt(766, y + 4, (2864 - i * .5).toFixed(1));
  }
  [484, 604, 724].forEach(x => s += seg(x + .5, 621, x + .5, 987, '#242424') + seg(x + .5, 981, x + .5, 987, '#999'));
  s += `<text x="594" y="814" text-anchor="middle" class="wm" style="font-size:27px">IMOEX2 30S</text>`;
  s += candles(zoomed('38,740 45,790 52,680 58,560 65,560 72,600 80,610 90,500 98,580 108,570 115,600 125,560 137,500 145,560 155,600 162,740 170,670 175,640 182,660 190,620 200,570 210,640 218,700 230,795 240,785 252,730 265,765 275,800 290,840 300,815 310,795 320,805 332,720 342,600 350,450 357,300 362,250 368,300 372,330 376,420 385,440 392,600 398,560 405,700 413,740 420,760 430,930 436,870 445,950 455,950 465,1090 475,990 485,1010 492,1060 502,1000 510,850 516,790 525,730 533,740 540,680 553,560 562,680 573,600 582,740 590,900 597,850 603,560 610,660 618,830 627,920 633,780 640,880 650,960 660,850 670,850 678,960 685,1130 692,1040 700,1050 708,1010 718,920 728,1020 736,1110 742,1080 750,1130 758,980 766,960 775,1000 780,900 788,1040 797,1120 803,1080 808,1010 815,1100 825,1080 833,1140 840,950 848,780 855,720 862,770 872,760 880,640 885,520 890,560 896,470 903,600 910,600 916,540 922,600 930,560 937,600 945,640 950,560 957,650 962,500 967,560', 420, 560), 1, 1, 9, 4);
  s += wicks([[685, 1100, 1265, UP], [895, 412, 600, UP], [605, 520, 610, UP], [781, 780, 1000, MIX], [92, 472, 560, UP], [198, 535, 600, MIX], [362, 235, 320, UP], [718, 870, 1000, UP], [850, 625, 780, UP], [962, 432, 660, UP], [884, 465, 600, UP], [808, 915, 1080, UP], [649, 900, 1080, DOWN], [592, 850, 970, DOWN], [465, 1050, 1140, MIX], [162, 720, 790, DOWN], [535, 615, 740, MIX], [631, 700, 900, UP], [613, 690, 890, DOWN], [433, 815, 960, MIX], [400, 640, 760, DOWN], [736, 1000, 1175, MIX], [824, 985, 1120, UP], [940, 560, 685, DOWN]].map(([x, a, b, c]) => [Math.round(420 + x / 3) + .5, 560 + a / 3, 560 + b / 3, c]));
  s += seg(427, 987.5, 759, 987.5, '#8a8a8a') + seg(759.5, 621, 759.5, 1000, '#8a8a8a');
  s += seg(744, 737.5, 759, 737.5, '#6fdcab') + rect(760, 732, 57, 12, '#63d8a4') + txt(766, 742, '2861.15', '', '', '#e0fff0');
  s += txt(427, 998, 'мар17') + txt(603, 998, '10:00', 'middle') + txt(723, 998, '12:00', 'middle');
  document.getElementById('c2').innerHTML = s;
})();

// BRJ6 1M
(() => {
  let s = rect(822, 621, 390, 379, '#191919');
  for (let i = 0; i < 21; i++) {
    const y = Math.round(635 + i * 17.12);
    s += seg(822, y + .5, 1161, y + .5, '#242424') + seg(1161, y + .5, 1166, y + .5, '#999') + txt(1168, y + 4, (105.6 - i * .2).toFixed(1));
  }
  [882, 953, 1024, 1095].forEach(x => s += seg(x + .5, 621, x + .5, 987, '#242424') + seg(x + .5, 981, x + .5, 987, '#999'));
  s += `<text x="990" y="819" text-anchor="middle" class="wm" style="font-size:40px">BRJ6 1M</text>`;
  s += seg(880.5, 626, 880.5, 987, '#8c8c8c');
  s += '<clipPath id="k3"><path d="M822 621h339v366H822z"/></clipPath><g clip-path="url(#k3)">';
  s += candles(zoomed('30,1220 36,1250 42,1240 48,1280', 815, 560), 1.3, 1, 4, 5);
  s += candles(zoomed('95,1280 100,1270 105,1240 115,1225 125,1205 135,1210 142,1225 148,1170 155,1110 162,1120 170,1160 180,1200 190,1160 195,1170', 815, 560), 1.3, 1.2, 6, 4);
  s += candles(zoomed('200,210 205,195 213,200 222,215 230,250 240,300 246,350 258,370 270,440 280,490 290,480 300,520 312,575 320,480 335,480 345,500 352,465 365,480 380,470 392,480 405,450 418,480 430,520 440,470 455,465 470,460 480,490 493,570 505,600 520,680 530,680 535,655 545,670 555,670 565,630 575,590 582,580 592,620 600,580 608,545 620,590 632,620 645,570 655,530 668,490 676,450 685,420 697,390 707,400 718,480 730,450 742,480 755,430 765,480 775,560 785,600 797,560 808,490 815,440 828,430 842,460 855,490 868,520 878,570 886,600 895,580 905,565', 815, 560), 1.25, 1.2, 8, 5);
  s += wicks([[202, 190, 380, UP], [181, 1150, 1280, DOWN], [520, 650, 730, DOWN], [310, 560, 612, DOWN], [608, 518, 570, UP], [632, 580, 638, UP], [697, 366, 440, UP], [755, 395, 450, DOWN], [785, 570, 622, UP], [829, 405, 460, UP], [430, 500, 545, UP], [847, 450, 540, UP], [278, 470, 550, DOWN]].map(([x, a, b, c]) => [Math.round(815 + x / 3) + .5, 560 + a / 3, 560 + b / 3, c]));
  s += '</g>' + seg(822, 987.5, 1161, 987.5, '#8a8a8a') + seg(1161.5, 621, 1161.5, 1000, '#8a8a8a');
  s += seg(1118, 745.5, 1161, 745.5, '#6fdcab') + rect(1162, 740, 50, 12, '#63d8a4') + txt(1168, 750, '104.32', '', '', '#e0fff0');
  [[878, 'мар17'], [952, '10:00'], [1023, '11:00'], [1094, '12:00']].forEach(([x, t]) => s += txt(x, 998, t, 'middle'));
  document.getElementById('c3').innerHTML = s;
})();

// clusters, volume profile and trade feed beside the order book
(() => {
  let s = rect(1217, 94, 463, 924, '#191919');
  for (let y = 183; y < 1018; y += 120) s += seg(1217, y + .5, 1680, y + .5, '#3a3a3a');
  // volume profile: y, red width, green width
  [[106, 4, 0], [118, 0, 2], [130, 0, 2], [142, 0, 5], [154, 5, 10], [166, 2, 0], [178, 0, 10], [190, 2, 0], [202, 3, 0], [226, 5, 0], [238, 0, 1], [250, 2, 0], [262, 2, 0], [286, 7, 1], [298, 12, 8], [310, 2, 0], [370, 0, 2], [394, 0, 4], [406, 0, 3], [418, 4, 0], [454, 0, 69], [466, 9, 3], [478, 0, 4], [490, 4, 0], [562, 0, 3], [586, 0, 7], [598, 0, 4], [610, 2, 4], [622, 3, 0], [646, 0, 2], [658, 4, 0], [682, 0, 3], [706, 4, 0], [718, 0, 3], [742, 0, 4], [766, 5, 0], [778, 0, 99], [790, 18, 20], [802, 14, 2], [814, 3, 2], [826, 3, 0], [838, 0, 3], [850, 2, 0], [874, 0, 2]].forEach(([y, r, g]) => {
    s += rect(1375, y, r, 10, '#6e0d18') + rect(1375 + r, y, g, 10, '#154a18');
  });
  s += seg(1373.5, 94, 1373.5, 1018, '#8d5a5e');
  s += rect(1375, 95, 305, 12, '#850008') + txt(1674, 105, '19 121 992', 'end', 'tb');
  s += txt(1675, 123, '-0,05%', 'end', 'big', '#d00010') + txt(1674, 138, '0,005', 'end', 'big') + txt(1674, 153, '1x', 'end', 'big');
  const G = '#173a19', R = '#4c0d14', B = '#a8a8a8';
  [['', G], ['', G], ['', R], ['7', G], ['78', '#1a5a1c'], ['15', R], ['4', G], ['72', G], ['90', '#82101a'], ['3', G], ['1', R], ['9', G], ['89', G], ['5', G], ['17', G], ['82', G], ['35', '#189018'], ['4', G], ['26', '#17501a'], ['0', R], ['0', '#600f1c'], ['4', R]].forEach(([t, f], i) => {
    const y = 393.5 + i * 12;
    s += rect(1215, y, 36.5, 10, f, t === '35' ? '#e00000' : B) + txt(1217, y + 9, t, '', 'cl');
  });
  [['693415', '#189018'], ['86434', R], ['7719', R], ['554', R]].forEach(([t, f], i) => {
    const y = 453.5 + i * 12;
    s += rect(1256.5, y, 55, 10, f, i ? B : '#e00000') + txt(1257, y + 9, t, '', i === 3 ? 'thin10' : 'cl');
  });
  [['1399', G], ['20024', '#f00008'], ['18371', '#14501a'], ['9757', '#a80410'], ['1773', R], ['3410', R], ['2188', G], ['6681', '#880812']].forEach(([t, f], i) => {
    const y = 453.5 + i * 12;
    s += rect(1316.5, y, 55, 10, f, B) + txt(1317, y + 9, t, '', 'cl');
  });
  s += seg(1314.5, 465, 1314.5, 536, '#a01018') + seg(1254.5, 453, 1254.5, 464, '#189018');
  s += '<clipPath id="k4"><path d="M1374 480h306v120h-306z"/></clipPath>';
  const red = [[1376, 14, '10', 1380], [1406, 20, '2 083'], [1436, 14, '810'], [1472, 10, '74'], [1579, 10, '12', 1577], [1611, 10, '18'], [1651, 10, '36']];
  const green = [[1456, 10, '10'], [1488, 10, '12'], [1505, 10, '37'], [1521, 10, '35'], [1537, 10, '20'], [1558, 13, '250'], [1595, 10, '25'], [1668, 10, '12']];
  s += '<g clip-path="url(#k4)">';
  red.forEach(([x, r]) => s += `<circle cx="${x}" cy="543" r="${r}" fill="#8a040c" stroke="#a00a14"/>`);
  green.forEach(([x, r]) => s += `<circle cx="${x}" cy="531" r="${r}" fill="#089408" stroke="#3be03b"/>`);
  s += rect(1618.5, 523.5, 26, 15, '#089408', '#3be03b') + '</g>';
  red.forEach(([x, , t, tx]) => s += txt(tx || x, 547, t, 'middle', 'cl'));
  green.forEach(([x, , t]) => s += txt(x, 535, t, 'middle', 'cl'));
  s += txt(1631, 535, '999', 'middle', 'cl');
  s += seg(1217, 1002.5, 1373, 1002.5, '#2e2e2e') + txt(1216, 999, '1:45', '', 'thin10') + txt(1283, 999, '12:00', 'middle', 'thin10') + txt(1344, 999, '12:15', 'middle', 'thin10');
  s += rect(1338, 1007, 30, 9, '#7a7a7a');
  s += rect(1588, 1007, 92, 12, '#0a9612') + txt(1674, 1017, '5 750 884', 'end', 'tb');
  document.getElementById('c4').innerHTML = s;
})();
```
